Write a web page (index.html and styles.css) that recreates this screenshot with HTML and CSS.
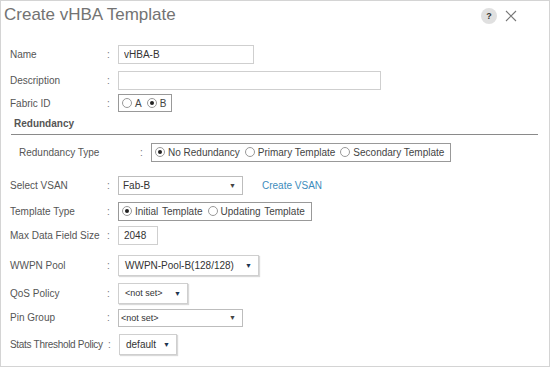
FILE: index.html
```html
<!DOCTYPE html>
<html lang="en">
<head>
    <meta charset="UTF-8">
    <title>Create vHBA Template</title>
    <link rel="stylesheet" href="styles.css">
</head>
<body>
    <div class="dialog">
        <div class="dialog-header">
            <h1>Create vHBA Template</h1>
            <div class="header-icons">
                <span class="help-icon">?</span>
                <svg class="close-icon" width="12" height="12" viewBox="0 0 12 12">
                    <path d="M1 1 L11 11 M11 1 L1 11" stroke="#777" stroke-width="1.1" fill="none"/>
                </svg>
            </div>
        </div>

        <div class="form">
            <div class="row">
                <span class="label">Name</span><span class="colon">:</span>
                <input type="text" class="text-input w-name" value="vHBA-B">
            </div>
            <div class="row">
                <span class="label">Description</span><span class="colon">:</span>
                <input type="text" class="text-input w-desc" value="">
            </div>
            <div class="row row-short">
                <span class="label">Fabric ID</span><span class="colon">:</span>
                <div class="radio-group fabric">
                    <span class="radio"></span>A
                    <span class="radio checked"></span>B
                </div>
            </div>

            <div class="section-title">Redundancy</div>

            <div class="row row-indent">
                <span class="label label-wide">Redundancy Type</span><span class="colon">:</span>
                <div class="radio-group">
                    <span class="radio checked"></span>No Redundancy
                    <span class="radio"></span>Primary Template
                    <span class="radio"></span>Secondary Template
                </div>
            </div>

            <div class="row row-vsan">
                <span class="label">Select VSAN</span><span class="colon">:</span>
                <div class="select sel-vsan"><span>Fab-B</span><span class="arrow gray">&#9660;</span></div>
                <a class="link" href="#">Create VSAN</a>
            </div>
            <div class="row">
                <span class="label">Template Type</span><span class="colon">:</span>
                <div class="radio-group template">
                    <span class="radio checked"></span>Initial Template
                    <span class="radio"></span>Updating Template
                </div>
            </div>
            <div class="row row-short2">
                <span class="label">Max Data Field Size</span><span class="colon">:</span>
                <input type="text" class="text-input w-max" value="2048">
            </div>
            <div class="row row-wwpn">
                <span class="label">WWPN Pool</span><span class="colon">:</span>
                <div class="select raised sel-wwpn"><span>WWPN-Pool-B(128/128)</span><span class="arrow">&#9660;</span></div>
            </div>
            <div class="row row-qos">
                <span class="label">QoS Policy</span><span class="colon">:</span>
                <div class="select raised sel-qos"><span class="small">&lt;not set&gt;</span><span class="arrow">&#9660;</span></div>
            </div>
            <div class="row row-pin">
                <span class="label">Pin Group</span><span class="colon">:</span>
                <div class="select sel-pin"><span class="small">&lt;not set&gt;</span><span class="arrow gray">&#9660;</span></div>
            </div>
            <div class="row row-stats">
                <span class="label label-tight">Stats Threshold Policy</span><span class="colon colon-tight">:</span>
                <div class="select raised sel-stats"><span>default</span><span class="arrow">&#9660;</span></div>
            </div>
        </div>
    </div>
</body>
</html>
```

FILE: styles.css
```css
* {
    margin: 0;
    padding: 0;
    box-sizing: border-box;
}
body {
    font-family: 'Liberation Sans', Arial, sans-serif;
    background-color: #ffffff;
    color: #444;
    font-size: 10px;
}
.dialog {
    width: 550px;
    height: 367px;
    border: 1px solid #d4d4d4;
    background-color: #ffffff;
}
.dialog-header {
    height: 40px;
    display: flex;
    justify-content: space-between;
    align-items: flex-start;
    padding: 3px 0 0 3px;
}
.dialog-header h1 {
    font-size: 17px;
    font-weight: normal;
    color: #737373;
    line-height: 22px;
}
.header-icons {
    display: flex;
    align-items: center;
    gap: 8px;
    margin: 4px 32px 0 0;
}
.help-icon {
    width: 16px;
    height: 16px;
    border-radius: 50%;
    background-color: #e0e0e0;
    color: #333;
    font-size: 9px;
    font-weight: bold;
    display: flex;
    align-items: center;
    justify-content: center;
}
.form {
    padding: 0 0 0 9px;
}
.row {
    height: 26px;
    display: flex;
    align-items: center;
}
.row-short {
    height: 20px;
}
.label {
    width: 97px;
    color: #555;
    white-space: nowrap;
}
.label-tight {
    letter-spacing: -0.3px;
}
.colon {
    width: 11px;
    color: #777;
}
.colon-tight {
    width: 12px;
    padding-left: 1px;
}
.text-input {
    height: 19px;
    border: 1px solid #cfcfcf;
    font-family: inherit;
    font-size: 10px;
    color: #333;
    padding: 0 5px;
    outline: none;
}
.w-name { width: 136px; }
.w-desc { width: 263px; }
.w-max { width: 40px; }
.radio-group {
    height: 19px;
    display: flex;
    align-items: center;
    border: 1px solid #999;
    padding: 0 6px 0 3px;
    color: #444;
    white-space: nowrap;
}
.radio-group.fabric {
    height: 18px;
    padding-right: 5px;
}
.radio-group.template {
    padding-right: 6px;
    word-spacing: 1px;
}
.radio {
    width: 10px;
    height: 10px;
    border: 1px solid #999;
    border-radius: 50%;
    margin: 0 3px 0 5px;
    display: inline-flex;
    align-items: center;
    justify-content: center;
}
.radio:first-child {
    margin-left: 0;
}
.radio.checked::after {
    content: "";
    width: 4px;
    height: 4px;
    border-radius: 50%;
    background-color: #222;
}
.section-title {
    height: 22px;
    margin: 0 11px 0 1px;
    padding: 5px 0 0 3px;
    font-weight: bold;
    color: #555;
    border-bottom: 1px solid #8a8a8a;
}
.row-indent {
    margin-top: 4px;
    padding-left: 9px;
}
.label-wide {
    width: 121px;
}
.row-vsan {
    margin-top: 7px;
}
.row-short2 {
    height: 22px;
}
.row-wwpn {
    margin-top: 6px;
}
.row-qos {
    margin-top: 2px;
}
.row-pin {
    height: 23px;
}
.row-stats {
    margin-top: 2px;
}
.select {
    height: 19px;
    border: 1px solid #bdbdbd;
    display: flex;
    align-items: center;
    justify-content: space-between;
    padding: 0 6px 0 4px;
    color: #333;
}
.select.raised {
    height: 21px;
    border-color: #cfcfcf;
    box-shadow: 1px 1px 1px rgba(0,0,0,0.15);
    padding-left: 6px;
}
.select .small {
    font-size: 9px;
}
.arrow {
    font-size: 7px;
    color: #1e3550;
}
.arrow.gray {
    color: #444;
}
.sel-vsan { width: 125px; }
.sel-wwpn { width: 141px; }
.sel-qos { width: 70px; }
.sel-pin { width: 125px; height: 18px; padding-left: 2px; }
.sel-stats { width: 58px; height: 22px; padding-left: 7px; }
.link {
    margin-left: 19px;
    color: #3d8cbc;
    text-decoration: none;
}
```
